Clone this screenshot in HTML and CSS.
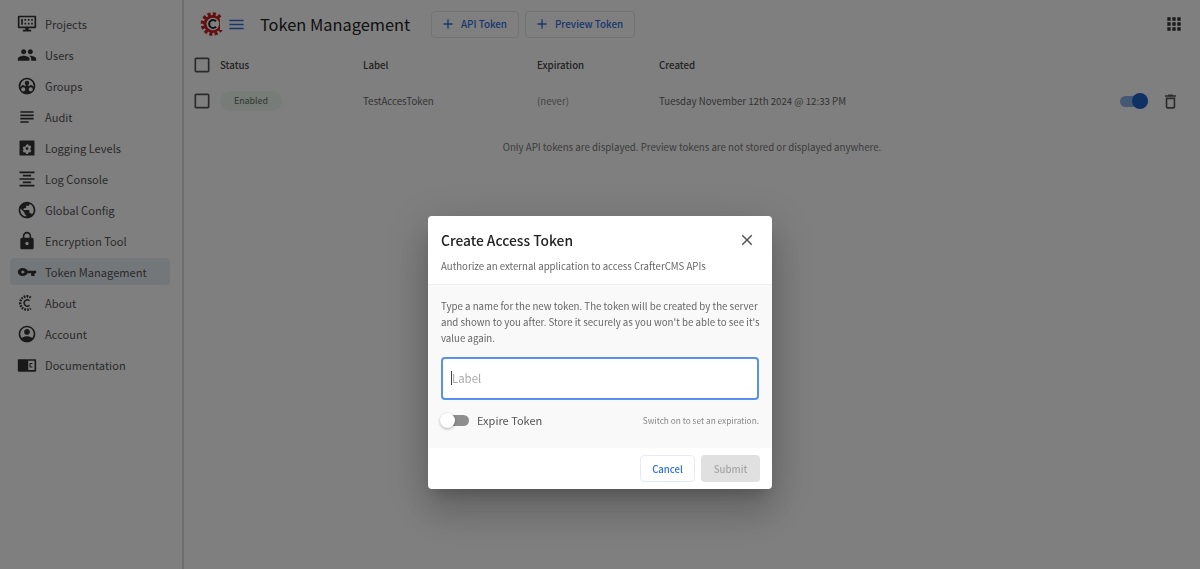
FILE: index.html
```html
<!DOCTYPE html>
<html lang="en">
<head>
    <meta charset="UTF-8">
    <meta name="viewport" content="width=device-width, initial-scale=1.0">
    <title>Token Management</title>
    <link rel="stylesheet" href="styles.css">
</head>
<body>

<div class="app">
    <!-- Left navigation -->
    <aside class="sidebar">
        <a class="nav-item">
            <svg class="nav-icon" viewBox="0 0 24 24"><path fill-rule="evenodd" d="M2 2h20a1 1 0 0 1 1 1v13a1 1 0 0 1-1 1h-8v2h3v2H7v-2h3v-2H2a1 1 0 0 1-1-1V3a1 1 0 0 1 1-1zm1 2v11h18V4zM5 6h2v7H5zm4 0h2v2H9zm4 0h2v2h-2zm4 0h2v2h-2zM9 10.500h2v2H9zm4 0h2v2h-2zm4 0h2v2h-2z"/></svg>
            <span>Projects</span>
        </a>
        <a class="nav-item">
            <svg class="nav-icon" viewBox="0 0 24 24"><path d="M16 11c1.660 0 2.990-1.340 2.990-3S17.660 5 16 5c-1.660 0-3 1.340-3 3s1.340 3 3 3zm-8 0c1.660 0 2.990-1.340 2.990-3S9.660 5 8 5C6.340 5 5 6.340 5 8s1.340 3 3 3zm0 2c-2.330 0-7 1.170-7 3.500V19h14v-2.500c0-2.330-4.670-3.500-7-3.500zm8 0c-.29 0-.62.02-.97.05 1.160.84 1.970 1.970 1.970 3.450V19h6v-2.500c0-2.330-4.670-3.500-7-3.500z"/></svg>
            <span>Users</span>
        </a>
        <a class="nav-item">
            <svg class="nav-icon" viewBox="0 0 24 24"><path fill-rule="evenodd" d="M12 2C6.480 2 2 6.480 2 12s4.480 10 10 10 10-4.480 10-10S17.520 2 12 2zm0 2a8 8 0 0 1 8 8c0 .5 0 1-.1 1.400a3 3 0 0 0-5.400-1.200 3.400 3.400 0 0 0-5 0 3 3 0 0 0-5.400 1.200C4 13 4 12.500 4 12a8 8 0 0 1 8-8zm0 1.800a2.700 2.700 0 1 0 0 5.400 2.700 2.700 0 0 0 0-5.400zM7.500 13.500a2.500 2.500 0 1 0 0 5 2.500 2.500 0 0 0 0-5zm9 0a2.500 2.500 0 1 0 0 5 2.500 2.500 0 0 0 0-5z"/></svg>
            <span>Groups</span>
        </a>
        <a class="nav-item">
            <svg class="nav-icon" viewBox="0 0 24 24"><path d="M14 17H4v2h10v-2zm6-8H4v2h16V9zM4 15h16v-2H4v2zM4 5v2h16V5H4z"/></svg>
            <span>Audit</span>
        </a>
        <a class="nav-item">
            <svg class="nav-icon" viewBox="0 0 24 24"><path fill-rule="evenodd" d="M4 3h16a1 1 0 0 1 1 1v16a1 1 0 0 1-1 1H4a1 1 0 0 1-1-1V4a1 1 0 0 1 1-1zm6.800 5.500-.3 1.300-1.200.7-1.300-.4-1.200 2.100 1 .9v1.400l-1 .9 1.200 2.100 1.300-.4 1.200.7.300 1.300h2.400l.3-1.300 1.200-.7 1.300.4 1.200-2.100-1-.9V11.900l1-.9-1.200-2.100-1.300.4-1.200-.7-.3-1.300zM12 11a1.700 1.700 0 1 1 0 3.400 1.700 1.700 0 0 1 0-3.400z"/></svg>
            <span>Logging Levels</span>
        </a>
        <a class="nav-item">
            <svg class="nav-icon" viewBox="0 0 24 24"><path d="M7 15v2h10v-2H7zm-4 6h18v-2H3v2zm0-8h18v-2H3v2zm4-6v2h10V7H7zM3 3v2h18V3H3z"/></svg>
            <span>Log Console</span>
        </a>
        <a class="nav-item">
            <svg class="nav-icon" viewBox="0 0 24 24"><path d="M12 2C6.480 2 2 6.480 2 12s4.480 10 10 10 10-4.480 10-10S17.520 2 12 2zm-1 17.930c-3.950-.49-7-3.850-7-7.930 0-.62.08-1.210.21-1.790L9 15v1c0 1.100.9 2 2 2v1.930zm6.900-2.540c-.26-.81-1-1.390-1.900-1.390h-1v-3c0-.55-.45-1-1-1H8v-2h2c.55 0 1-.45 1-1V7h2c1.100 0 2-.9 2-2v-.41c2.930 1.190 5 4.060 5 7.410 0 2.080-.8 3.970-2.100 5.390z"/></svg>
            <span>Global Config</span>
        </a>
        <a class="nav-item">
            <svg class="nav-icon" viewBox="0 0 24 24"><path d="M18 8h-1V6c0-2.760-2.240-5-5-5S7 3.240 7 6v2H6c-1.100 0-2 .9-2 2v10c0 1.100.9 2 2 2h12c1.100 0 2-.9 2-2V10c0-1.100-.9-2-2-2zm-6 9c-1.100 0-2-.9-2-2s.9-2 2-2 2 .9 2 2-.9 2-2 2zm3.100-9H8.900V6c0-1.710 1.390-3.100 3.100-3.100 1.710 0 3.100 1.390 3.100 3.100v2z"/></svg>
            <span>Encryption Tool</span>
        </a>
        <a class="nav-item selected">
            <svg class="nav-icon" viewBox="0 0 24 24"><path transform="translate(0 2.400) scale(1 .8)" d="M12.650 10C11.830 7.670 9.610 6 7 6c-3.310 0-6 2.690-6 6s2.690 6 6 6c2.610 0 4.830-1.670 5.650-4H17v4h4v-4h2v-4H12.650zM7 14c-1.100 0-2-.9-2-2s.9-2 2-2 2 .9 2 2-.9 2-2 2z"/></svg>
            <span>Token Management</span>
        </a>
        <a class="nav-item">
            <svg class="nav-icon" viewBox="0 0 24 24"><g fill="none" stroke="#333"><path stroke-width="3" d="M16.500 5.500a8 8 0 1 0 0 13" stroke-dasharray="2 1.300"/><path stroke-width="1.700" d="M15 9.200a3.800 3.800 0 1 0 0 5.600"/></g></svg>
            <span>About</span>
        </a>
        <a class="nav-item">
            <svg class="nav-icon" viewBox="0 0 24 24"><path fill-rule="evenodd" d="M12 2C6.480 2 2 6.480 2 12s4.480 10 10 10 10-4.480 10-10S17.520 2 12 2zm0 2a8 8 0 0 1 6.300 12.900C16.600 15.400 14 14.800 12 14.800s-4.600.6-6.300 2.100A8 8 0 0 1 12 4zm0 2c-1.900 0-3.500 1.600-3.500 3.500S10.100 13 12 13s3.500-1.600 3.500-3.500S13.900 6 12 6z"/></svg>
            <span>Account</span>
        </a>
        <a class="nav-item">
            <svg class="nav-icon" viewBox="0 0 24 24"><path fill-rule="evenodd" d="M2 5h9a2 2 0 0 1 1 .3A2 2 0 0 1 13 5h9a1 1 0 0 1 1 1v13a1 1 0 0 1-1 1H13a2 2 0 0 1-1-.3 2 2 0 0 1-1 .3H2a1 1 0 0 1-1-1V6a1 1 0 0 1 1-1zm11.500 2v11H21V7zm5 2.500h-2.500a1 1 0 0 0-1 1v3.500a1 1 0 0 0 1 1h2.500v-1.300h-2.200v-2.900h2.200z"/></svg>
            <span>Documentation</span>
        </a>
    </aside>

    <main class="content">
        <header class="toolbar">
            <svg class="logo" viewBox="0 0 24 24">
                <circle cx="12.500" cy="12" r="9.800" fill="none" stroke="#c62020" stroke-width="4" stroke-dasharray="3 2.130"/>
                <circle cx="12.500" cy="12" r="7.500" fill="none" stroke="#c62020" stroke-width="3"/>
                <circle cx="13" cy="12" r="6.200" fill="#fff"/>
                <path d="M16 9.200a4 4 0 1 0 0 5.600" fill="none" stroke="#222" stroke-width="2"/>
                <rect x="20" y="6" width="4" height="12" fill="#fff"/>
            </svg>
            <svg class="menu-icon" viewBox="0 0 24 24"><path d="M3 18h18v-2H3v2zm0-5h18v-2H3v2zm0-7v2h18V6H3z"/></svg>
            <h1>Token Management</h1>
            <button class="outline-btn btn-api"><svg viewBox="0 0 24 24"><path d="M19 13h-6v6h-2v-6H5v-2h6V5h2v6h6v2z"/></svg>API Token</button>
            <button class="outline-btn btn-preview"><svg viewBox="0 0 24 24"><path d="M19 13h-6v6h-2v-6H5v-2h6V5h2v6h6v2z"/></svg>Preview Token</button>
            <svg class="apps-icon" viewBox="0 0 24 24"><path d="M4 8h4V4H4v4zm6 12h4v-4h-4v4zm-6 0h4v-4H4v4zm0-6h4v-4H4v4zm6 0h4v-4h-4v4zm6-10v4h4V4h-4zm-6 4h4V4h-4v4zm6 6h4v-4h-4v4zm0 6h4v-4h-4v4z"/></svg>
        </header>

        <table class="tokens">
            <thead>
                <tr>
                    <th class="col-check"><svg class="check" viewBox="0 0 24 24"><path d="M19 5v14H5V5h14m0-2H5c-1.100 0-2 .9-2 2v14c0 1.100.9 2 2 2h14c1.100 0 2-.9 2-2V5c0-1.100-.9-2-2-2z"/></svg></th>
                    <th class="col-status">Status</th>
                    <th class="col-label">Label</th>
                    <th class="col-exp">Expiration</th>
                    <th class="col-created">Created</th>
                    <th></th>
                </tr>
            </thead>
            <tbody>
                <tr>
                    <td><svg class="check" viewBox="0 0 24 24"><path d="M19 5v14H5V5h14m0-2H5c-1.100 0-2 .9-2 2v14c0 1.100.9 2 2 2h14c1.100 0 2-.9 2-2V5c0-1.100-.9-2-2-2z"/></svg></td>
                    <td><span class="chip">Enabled</span></td>
                    <td>TestAccesToken</td>
                    <td class="muted">(never)</td>
                    <td>Tuesday November 12th 2024 @ 12:33 PM</td>
                    <td>
                        <div class="row-actions">
                            <span class="switch-on"><span class="knob-on"></span></span>
                            <svg class="trash" viewBox="0 0 24 24"><path d="M6 19c0 1.100.9 2 2 2h8c1.100 0 2-.9 2-2V7H6v12zM8 9h8v10H8V9zm7.500-5l-1-1h-5l-1 1H5v2h14V4z"/></svg>
                        </div>
                    </td>
                </tr>
            </tbody>
        </table>

        <p class="note">Only API tokens are displayed. Preview tokens are not stored or displayed anywhere.</p>
    </main>
</div>

<!-- Create token dialog -->
<div class="backdrop">
    <div class="dialog">
        <div class="dialog-head">
            <div class="dialog-title">
                <h2>Create Access Token</h2>
                <svg class="close" viewBox="0 0 24 24"><path d="M19 6.410L17.590 5 12 10.590 6.410 5 5 6.410 10.590 12 5 17.590 6.410 19 12 13.410 17.590 19 19 17.590 13.410 12z"/></svg>
            </div>
            <p>Authorize an external application to access CrafterCMS APIs</p>
        </div>
        <div class="dialog-body">
            <p>Type a name for the new token. The token will be created by the server and shown to you after. Store it securely as you won't be able to see it's value again.</p>
            <div class="field"><span class="caret"></span><span class="placeholder">Label</span></div>
            <div class="expire">
                <span class="switch-off"><span class="knob-off"></span></span>
                <span class="expire-label">Expire Token</span>
                <span class="hint">Switch on to set an expiration.</span>
            </div>
        </div>
        <div class="dialog-foot">
            <button class="btn-cancel">Cancel</button>
            <button class="btn-submit">Submit</button>
        </div>
    </div>
</div>

</body>
</html>
```

FILE: styles.css
```css
* {
    box-sizing: border-box;
}
html, body {
    height: 100%;
    margin: 0;
}
body {
    font-family: "Noto Sans CJK SC", "Noto Sans", sans-serif;
    background: #fff;
    color: #333;
    overflow: hidden;
}
.app {
    display: flex;
    height: 100%;
}

/* sidebar */
.sidebar {
    width: 184px;
    flex: none;
    padding: 10px 12px 0 10px;
    border-right: 2px solid #dcdcdc;
    display: flex;
    flex-direction: column;
    gap: 4px;
}
.nav-item {
    display: flex;
    align-items: center;
    height: 27px;
    padding-left: 7px;
    gap: 8px;
    font-size: 11.100px;
    color: #555;
    border-radius: 4px;
}
.nav-item.selected {
    background: #e9eef5;
}
.nav-icon {
    width: 20px;
    height: 20px;
    fill: #333;
    flex: none;
}

/* toolbar */
.content {
    flex: 1;
    min-width: 0;
}
.toolbar {
    display: flex;
    align-items: center;
    height: 48px;
    padding: 0 16px;
}
.logo {
    width: 24px;
    height: 24px;
    flex: none;
}
.menu-icon {
    width: 19px;
    height: 19px;
    fill: #2f6fd8;
    margin-left: 3px;
    flex: none;
}
.toolbar h1 {
    font-size: 16.400px;
    font-weight: 400;
    margin: 0 0 0 14px;
    color: #222;
    width: 171px;
    flex: none;
}
.outline-btn {
    display: flex;
    align-items: center;
    height: 27px;
    background: #fff;
    border: 1px solid #e4e6ea;
    border-radius: 4px;
    font: 500 9.800px "Noto Sans CJK SC", "Noto Sans", sans-serif;
    color: #2f6fd8;
    padding: 0;
    flex: none;
}
.outline-btn svg {
    width: 16px;
    height: 16px;
    fill: #2f6fd8;
    margin: 0 5px 0 8px;
}
.btn-api {
    width: 88px;
}
.btn-preview {
    width: 110px;
    margin-left: 6px;
}
.apps-icon {
    width: 20px;
    height: 20px;
    fill: #333;
    margin-left: auto;
}

/* table */
.tokens {
    width: 100%;
    border-collapse: collapse;
    table-layout: fixed;
    font-size: 9.700px;
}
.tokens th {
    text-align: left;
    font-weight: 500;
    height: 34px;
    padding: 0;
    color: #444;
}
.tokens td {
    height: 38px;
    padding: 0;
    color: #666;
}
.col-check {
    width: 36px;
}
.col-status {
    width: 143px;
}
.col-label {
    width: 174px;
}
.col-exp {
    width: 122px;
}
.col-created {
    width: 360px;
}
.check {
    display: block;
    width: 20px;
    height: 20px;
    fill: #555;
    margin-left: 8px;
}
.chip {
    display: inline-block;
    width: 62px;
    height: 20px;
    line-height: 20px;
    text-align: center;
    font-size: 8.900px;
    background: #eff8f1;
    color: #5d6f60;
    border-radius: 10px;
}
.tokens td.muted {
    color: #888;
}
.row-actions {
    display: flex;
    align-items: center;
    justify-content: flex-end;
    gap: 13px;
    padding-right: 20px;
}
.switch-on {
    display: block;
    width: 28px;
    height: 11px;
    background: #8ab1e8;
    border-radius: 6px;
    position: relative;
}
.knob-on {
    position: absolute;
    right: 0;
    top: -3px;
    width: 16px;
    height: 16px;
    border-radius: 50%;
    background: #1f63c9;
}
.trash {
    width: 19px;
    height: 19px;
    fill: #555;
}
.note {
    text-align: center;
    font-size: 9.700px;
    line-height: 14px;
    color: #777;
    margin: 20px 0 0;
}

/* dialog */
.backdrop {
    position: fixed;
    top: 0;
    left: 0;
    right: 0;
    bottom: 0;
    background: rgba(0, 0, 0, 0.5);
    display: flex;
    justify-content: center;
    padding-top: 216px;
}
.dialog {
    width: 344px;
    height: 273px;
    background: #fff;
    border-radius: 4px;
    box-shadow: 0 11px 15px -7px rgba(0, 0, 0, 0.2), 0 24px 38px 3px rgba(0, 0, 0, 0.14), 0 9px 46px 8px rgba(0, 0, 0, 0.12);
    display: flex;
    flex-direction: column;
    overflow: hidden;
}
.dialog-head {
    height: 69px;
    padding: 12px 13px 0;
    border-bottom: 1px solid #f0f0f0;
    flex: none;
}
.dialog-title {
    display: flex;
    align-items: center;
    justify-content: space-between;
    height: 24px;
}
.dialog-title h2 {
    margin: 0;
    font-size: 13.800px;
    font-weight: 500;
    color: #222;
}
.close {
    width: 18px;
    height: 18px;
    fill: #555;
    margin-right: 3px;
}
.dialog-head p {
    margin: 6px 0 0;
    font-size: 9.650px;
    line-height: 16px;
    color: #666;
}
.dialog-body {
    height: 163px;
    padding: 13px 13px 0;
    background: #f9f9f9;
    flex: none;
}
.dialog-body p {
    margin: 0 -4px 0 0;
    font-size: 9.700px;
    line-height: 16px;
    color: #666;
}
.field {
    display: flex;
    align-items: center;
    height: 43px;
    margin-top: 11px;
    padding: 0 0 2px 8px;
    background: #fff;
    border: 2px solid #5b90ea;
    border-radius: 4px;
}
.caret {
    width: 1px;
    height: 14px;
    background: #444;
}
.placeholder {
    font-size: 11.400px;
    color: #aaa;
}
.expire {
    display: flex;
    align-items: center;
    margin-top: 9px;
    height: 22px;
}
.switch-off {
    display: block;
    width: 28px;
    height: 11px;
    background: #8e8e8e;
    border-radius: 6px;
    position: relative;
    flex: none;
}
.knob-off {
    position: absolute;
    left: -1px;
    top: -2px;
    width: 15px;
    height: 15px;
    border-radius: 50%;
    background: #fff;
    box-shadow: 0 1px 3px rgba(0, 0, 0, 0.3);
}
.expire-label {
    font-size: 11px;
    color: #555;
    margin-left: 8px;
}
.hint {
    font-size: 8.300px;
    color: #888;
    margin-left: auto;
}
.dialog-foot {
    flex: 1;
    display: flex;
    justify-content: flex-end;
    align-items: center;
    gap: 6px;
    padding-right: 12px;
}
.dialog-foot button {
    height: 27px;
    border-radius: 4px;
    font: 500 9.600px "Noto Sans CJK SC", "Noto Sans", sans-serif;
    padding: 0;
}
.btn-cancel {
    width: 55px;
    background: #fff;
    border: 1px solid #e4eaf7;
    color: #2f6fd8;
}
.btn-submit {
    width: 59px;
    background: #e0e0e0;
    border: none;
    color: #a6a6a6;
}
```
